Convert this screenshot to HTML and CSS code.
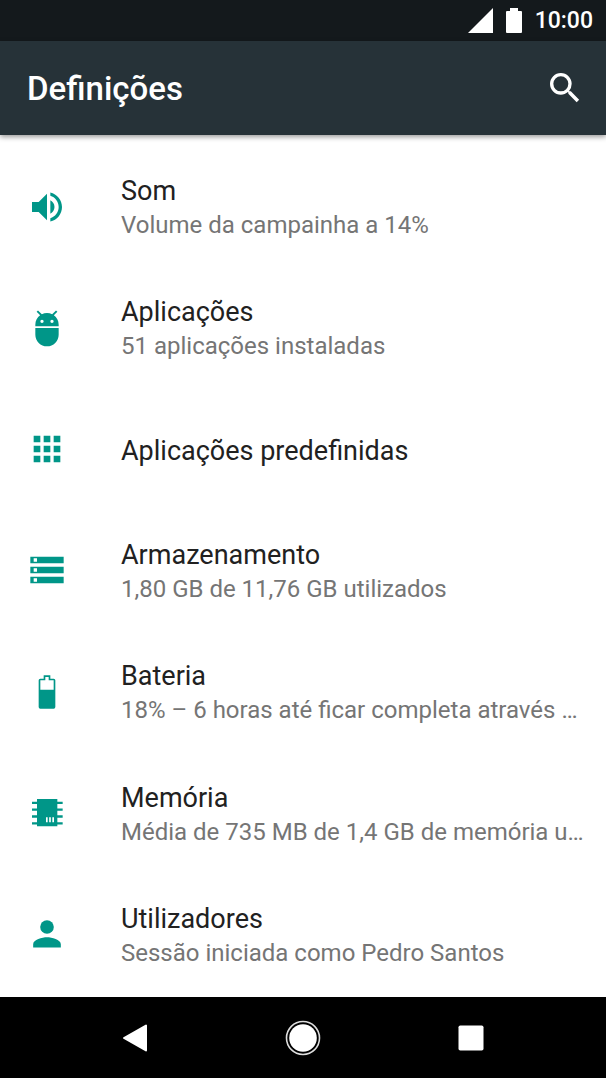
FILE: index.html
```html
<!DOCTYPE html>
<html lang="pt-PT">
<head>
<meta charset="utf-8">
<meta name="viewport" content="width=device-width, initial-scale=1">
<title>Definições</title>
<link rel="stylesheet" href="styles.css">
</head>
<body>
<div class="status-bar">
  <svg class="status-signal" viewBox="0 0 25 25" aria-hidden="true"><path d="M0 25 25 0v25z"/></svg>
  <svg class="status-battery" viewBox="0 0 16 25" aria-hidden="true"><path d="M4 0h8v3h3a1 1 0 0 1 1 1v20a1 1 0 0 1-1 1H1a1 1 0 0 1-1-1V4a1 1 0 0 1 1-1h3z"/></svg>
  <time class="status-time">10:00</time>
</div>
<header class="app-bar">
  <h1 class="app-title">Definições</h1>
  <button class="search-button" type="button" aria-label="Pesquisar">
    <svg class="icon" viewBox="0 0 24 24"><path d="M15.5 14h-.79l-.28-.27A6.47 6.47 0 0 0 16 9.500 6.500 6.500 0 1 0 9.500 16c1.610 0 3.090-.59 4.230-1.570l.27.28v.79l5 4.990L20.490 19zm-6 0a4.500 4.500 0 1 1 0-9 4.500 4.500 0 0 1 0 9z"/></svg>
  </button>
</header>
<main class="settings">
  <a class="row" href="#som">
    <svg class="icon" viewBox="0 0 24 24" aria-hidden="true"><path d="M3 9v6h4l5 5V4L7 9H3zm13.500 3c0-1.770-1.020-3.290-2.500-4.030v8.050c1.480-.73 2.500-2.250 2.500-4.020zM14 3.230v2.060c2.890.86 5 3.540 5 6.710s-2.110 5.850-5 6.710v2.060c4.010-.91 7-4.490 7-8.770s-2.990-7.860-7-8.770z"/></svg>
    <span class="row-text"><span class="row-title">Som</span><span class="row-summary">Volume da campainha a 14%</span></span>
  </a>
  <a class="row" href="#aplicacoes">
    <svg class="icon" viewBox="0 0 24 24" aria-hidden="true"><path d="M5 16c0 3.870 3.130 7 7 7s7-3.130 7-7v-4H5v4zM16.120 4.370l2.100-2.100-.82-.83-2.300 2.310C14.160 3.280 13.120 3 12 3s-2.160.28-3.090.75L6.600 1.440l-.82.83 2.100 2.100C6.140 5.640 5 7.680 5 10v1h14v-1c0-2.320-1.140-4.370-2.880-5.630zM9 9a1 1 0 1 1 0-2 1 1 0 0 1 0 2zm6 0a1 1 0 1 1 0-2 1 1 0 0 1 0 2z"/></svg>
    <span class="row-text"><span class="row-title">Aplicações</span><span class="row-summary">51 aplicações instaladas</span></span>
  </a>
  <a class="row" href="#predefinidas">
    <svg class="icon" viewBox="0 0 24 24" aria-hidden="true"><path d="M4 8h4V4H4zm6 12h4v-4h-4zm-6 0h4v-4H4zm0-6h4v-4H4zm6 0h4v-4h-4zm6-10v4h4V4zm-6 4h4V4h-4zm6 6h4v-4h-4zm0 6h4v-4h-4z"/></svg>
    <span class="row-text"><span class="row-title">Aplicações predefinidas</span></span>
  </a>
  <a class="row" href="#armazenamento">
    <svg class="icon" viewBox="0 0 24 24" aria-hidden="true"><path d="M2 20h20v-4H2v4zm2-3h2v2H4v-2zM2 4v4h20V4H2zm4 3H4V5h2v2zm-4 7h20v-4H2v4zm2-3h2v2H4v-2z"/></svg>
    <span class="row-text"><span class="row-title">Armazenamento</span><span class="row-summary">1,80 GB de 11,76 GB utilizados</span></span>
  </a>
  <a class="row" href="#bateria">
    <svg class="icon" viewBox="0 0 24 24" aria-hidden="true"><path fill-rule="evenodd" d="M10 2h4v2h2q1 0 1 1v16q0 1-1 1H8q-1 0-1-1V5q0-1 1-1h2zm1 1v2H8v5.600h8V5h-3V3z"/></svg>
    <span class="row-text"><span class="row-title">Bateria</span><span class="row-summary">18% – 6 horas até ficar completa através …</span></span>
  </a>
  <a class="row" href="#memoria">
    <svg class="icon" viewBox="0 0 24 24" aria-hidden="true"><path fill-rule="evenodd" d="M6 3.600h12.200v1.600h3.200v1.400h-3.200v2.700h3.200v1.400h-3.200v2.700h3.200v1.400h-3.200v2.700h3.200v1.400h-3.200V20H6v-1.100H3v-1.400h3v-2.700H3v-1.400h3v-2.700H3V9.300h3V6.600H3V5.200h3zM11.400 14.600v3h1v-3zm1.900 0v3h1v-3zm1.900 0v3h1v-3z"/></svg>
    <span class="row-text"><span class="row-title">Memória</span><span class="row-summary">Média de 735 MB de 1,4 GB de memória u…</span></span>
  </a>
  <a class="row" href="#utilizadores">
    <svg class="icon" viewBox="0 0 24 24" aria-hidden="true"><circle cx="12" cy="7.800" r="4.100"/><path d="M12 13.900c-2.800 0-8.300 1.400-8.300 4.200v2h16.600v-2c0-2.800-5.500-4.200-8.300-4.200z"/></svg>
    <span class="row-text"><span class="row-title">Utilizadores</span><span class="row-summary">Sessão iniciada como Pedro Santos</span></span>
  </a>
</main>
<nav class="nav-bar" aria-label="Sistema">
  <button class="nav-button" type="button" aria-label="Voltar"><svg class="nav-icon" viewBox="0 0 36 36"><path d="M7 18 29 5.500v25z" stroke="#fff" stroke-width="2" stroke-linejoin="round"/></svg></button>
  <button class="nav-button" type="button" aria-label="Início"><svg class="nav-icon" viewBox="0 0 36 36"><circle cx="18" cy="18" r="16.500" fill="none" stroke="#ddd" stroke-width="1.600"/><circle cx="18" cy="18" r="13.800"/></svg></button>
  <button class="nav-button" type="button" aria-label="Recentes"><svg class="nav-icon" viewBox="0 0 36 36"><rect x="5.500" y="5.500" width="25" height="25" rx="1.800"/></svg></button>
</nav>
</body>
</html>
```
FILE: styles.css
```css
* {
  box-sizing: border-box;
}

body {
  display: flex;
  flex-direction: column;
  min-height: 100vh;
  margin: 0;
  background: #fff;
  color: #212121;
  font-family: Roboto, "Noto Sans", sans-serif;
}

svg {
  display: block;
  flex: none;
  fill: currentColor;
}

button {
  display: flex;
  align-items: center;
  justify-content: center;
  padding: 0;
  border: 0;
  background: none;
  color: inherit;
}

.icon {
  width: 40px;
  height: 40px;
}

.status-bar {
  display: flex;
  align-items: center;
  justify-content: flex-end;
  gap: 13px;
  height: 41px;
  padding-right: 13px;
  background: #14191c;
  color: #fff;
}

.status-signal {
  width: 25px;
  height: 25px;
}

.status-battery {
  width: 16px;
  height: 25px;
}

.status-time {
  font-size: 23px;
  font-weight: 500;
  line-height: 41px;
}

.app-bar {
  display: flex;
  align-items: center;
  justify-content: space-between;
  height: 94px;
  padding: 0 21px 0 27px;
  background: #263238;
  color: #fff;
  box-shadow: 0 2px 5px rgba(0, 0, 0, 0.4);
}

.app-title {
  margin: 0;
  padding-top: 2px;
  font-size: 33px;
  font-weight: 500;
  line-height: 40px;
}

.settings {
  display: grid;
  flex: 1;
  grid-auto-rows: 1fr;
  padding: 11px 20px 2px 27px;
}

.row {
  display: flex;
  align-items: center;
  gap: 54px;
  min-width: 0;
  color: inherit;
  text-decoration: none;
}

.row .icon {
  color: #009688;
}

.row-text {
  display: flex;
  flex: 1;
  flex-direction: column;
  min-width: 0;
  padding-top: 3px;
}

.row-title,
.row-summary {
  overflow: hidden;
  line-height: 34px;
  text-overflow: ellipsis;
  white-space: nowrap;
}

.row-title {
  font-size: 27px;
}

.row-summary {
  color: #757575;
  font-size: 24px;
}

.nav-bar {
  display: grid;
  grid-template-columns: repeat(3, 1fr);
  height: 81px;
  padding: 0 51px;
  background: #000;
  color: #fff;
}

.nav-icon {
  width: 36px;
  height: 36px;
}
```
